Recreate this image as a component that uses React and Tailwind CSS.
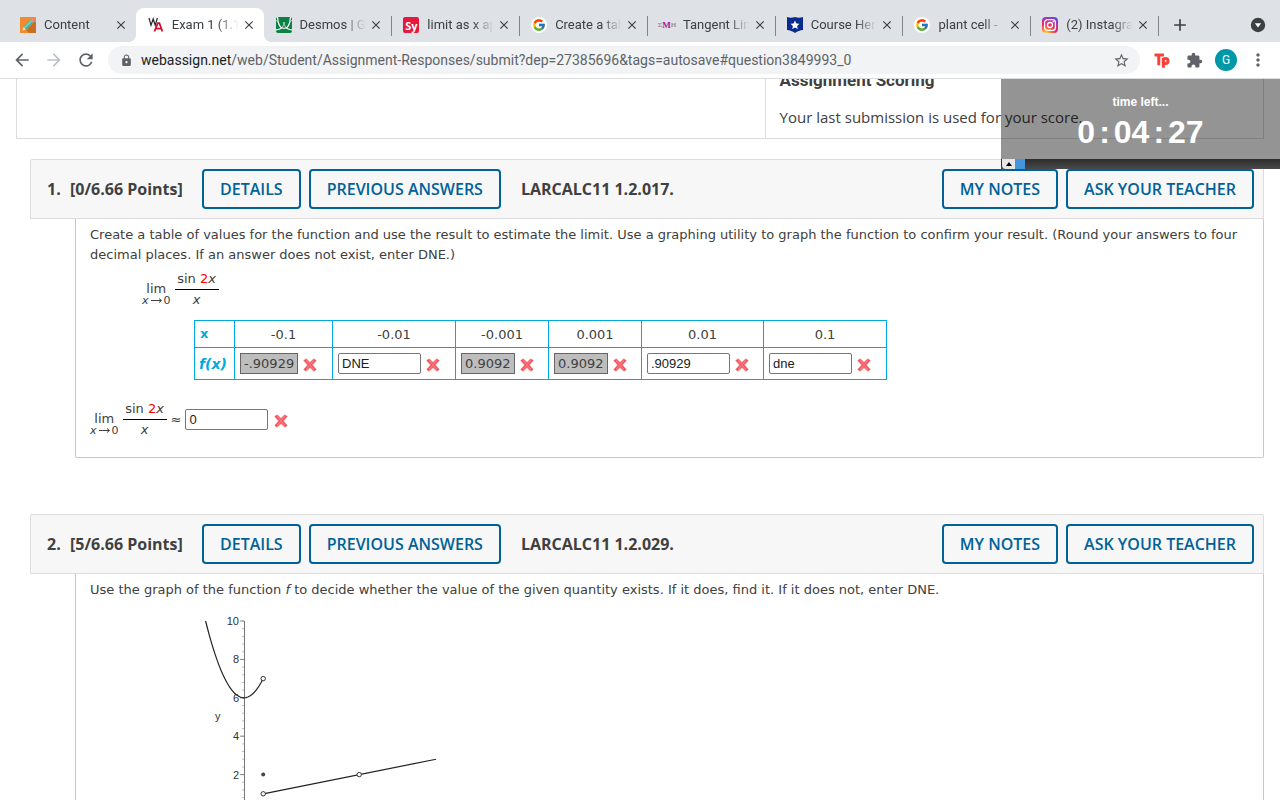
import React, { useState } from 'react';
import {
  MdArrowBack,
  MdArrowForward,
  MdRefresh,
  MdLock,
  MdStarBorder,
  MdExtension,
  MdMoreVert,
  MdClose,
  MdAdd,
} from 'react-icons/md';
import { FcGoogle } from 'react-icons/fc';

const PencilIcon = () => (
  <svg viewBox="0 0 16 16" className="h-4 w-4">
    <rect width="16" height="16" fill="#f08c2e" />
    <path d="M6 13 14.5 4.500 16 6v10H9z" fill="#c96f1f" />
    <path d="M2.500 13.500 3.600 10 6 12.400z" fill="#fde6c4" />
    <path d="M3.600 10 10.600 3l2.400 2.400-7 7z" fill="#3fb8b0" />
    <path d="m4.500 10.900 7-7" stroke="#a8ece2" strokeWidth="1" />
    <path d="m10.600 3 1-.9a1.200 1.200 0 0 1 1.700 0l.7.7a1.200 1.200 0 0 1 0 1.700l-1 .9z" fill="#e884b8" />
  </svg>
);

const WebAssignIcon = () => (
  <svg viewBox="0 0 16 16" className="h-4 w-4">
    <path d="m1 .8 2 7.500L5.200 2l2 6.300L9.400.8" fill="none" stroke="#222" strokeWidth="1.200" />
    <path d="m6.400 14.500 3.400-8.300h1.600l3 8.300M8.300 11.700h5" fill="none" stroke="#d0102a" strokeWidth="1.800" />
  </svg>
);

const DesmosIcon = () => (
  <svg viewBox="0 0 16 16" className="h-4 w-4">
    <rect width="16" height="16" rx="2" fill="#0b8043" />
    <path
      d="M0 3.500c2.500 0 3 7 5.500 7S7.500 5 8 5s0 5.500 2.500 5.500 3-7 5.500-7"
      fill="none"
      stroke="#b5dcc6"
      strokeWidth=".9"
    />
    <path d="M1.500 0C2 7 4 11.500 8 11.500S14 7 14.500 0" fill="none" stroke="#fff" strokeWidth="1.200" />
    <path d="M0 12.800c3 0 4.500-.8 6-2M16 12.800c-3 0-4.500-.8-6-2" stroke="#fff" strokeWidth="1.200" fill="none" />
  </svg>
);

const SymbolabIcon = () => (
  <span className="flex h-4 w-4 items-center justify-center rounded-xs bg-[#e5183e] font-['Open_Sans',sans-serif] text-[11px] leading-none font-bold text-white">
    Sy
  </span>
);

const GoogleIcon = () => (
  <span className="flex h-4 w-4 items-center justify-center rounded-full bg-white">
    <FcGoogle size={14} />
  </span>
);

const SmhIcon = () => (
  <span className="flex h-4 w-4 items-center justify-center font-['Liberation_Serif',serif] text-[7px] leading-none font-bold text-[#9a8c99]">
    Σ<span className="text-[9px] text-[#a3189b]">M</span>H
  </span>
);

const CourseHeroIcon = () => (
  <svg viewBox="0 0 16 16" className="h-4 w-4">
    <path d="M0 0c3 1.200 5.500.8 8 0 2.500.8 5 1.200 8 0v13c-3 .3-5.500 1.200-8 3-2.500-1.800-5-2.700-8-3z" fill="#0b2a8f" />
    <path d="m8 3.500 1.300 3 3.200.3-2.400 2.100.7 3.200L8 10.400l-2.800 1.700.7-3.200-2.400-2.100 3.200-.3z" fill="#fff" />
  </svg>
);

const InstagramIcon = () => (
  <svg viewBox="0 0 16 16" className="h-4 w-4">
    <defs>
      <radialGradient id="insta" cx=".25" cy="1.050" r="1.150">
        <stop offset="0" stopColor="#ffdc66" />
        <stop offset=".25" stopColor="#fb8a35" />
        <stop offset=".5" stopColor="#e8315b" />
        <stop offset=".78" stopColor="#b62cb0" />
        <stop offset="1" stopColor="#5a4fe0" />
      </radialGradient>
    </defs>
    <rect width="16" height="16" rx="4" fill="url(#insta)" />
    <rect x="2.600" y="2.600" width="10.800" height="10.800" rx="3" fill="none" stroke="#fff" strokeWidth="1.300" />
    <circle cx="8" cy="8" r="2.500" fill="none" stroke="#fff" strokeWidth="1.300" />
    <circle cx="11.200" cy="4.800" r=".8" fill="#fff" />
  </svg>
);

const tabs = [
  { title: 'Content', icon: PencilIcon },
  { title: 'Exam 1 (1.1', icon: WebAssignIcon, active: true },
  { title: 'Desmos | G', icon: DesmosIcon },
  { title: 'limit as x ap', icon: SymbolabIcon },
  { title: 'Create a tab', icon: GoogleIcon },
  { title: 'Tangent Lin', icon: SmhIcon },
  { title: 'Course Her', icon: CourseHeroIcon },
  { title: 'plant cell -', icon: GoogleIcon },
  { title: '(2) Instagra', icon: InstagramIcon },
];

const Tab = ({ title, icon: Icon, active, divider }) => (
  <div
    className={`relative flex min-w-0 flex-1 items-center pr-2 pl-3 ${active ? 'rounded-t-lg bg-white' : ''}`}
  >
    {active && (
      <>
        <span className="absolute bottom-0 -left-2 h-2 w-2 bg-[radial-gradient(circle_at_0_0,transparent_8px,white_8px)]" />
        <span className="absolute -right-2 bottom-0 h-2 w-2 bg-[radial-gradient(circle_at_100%_0,transparent_8px,white_8px)]" />
      </>
    )}
    <span className="shrink-0">
      <Icon />
    </span>
    <span className="ml-2 min-w-0 flex-1 overflow-hidden mask-r-from-65% mask-r-to-95% text-[13px] whitespace-nowrap text-[#3c4043]">
      {title}
    </span>
    <button type="button" aria-label={`Close ${title}`} className="shrink-0 text-[#3c4043]">
      <MdClose size={14} />
    </button>
    {divider && <span className="absolute top-2 -right-px h-5 w-px bg-[#808488]" />}
  </div>
);

const ToolButton = ({ label, children }) => (
  <button type="button" aria-label={label} className="flex h-7 w-8 items-center justify-center text-[#5f6368]">
    {children}
  </button>
);

const BrowserChrome = () => (
  <header className="shrink-0 font-[Roboto,sans-serif]">
    <div className="flex h-[42px] bg-[#dee1e6] pt-2 pl-2">
      <div className="flex min-w-0 flex-1">
        {tabs.map((tab, i) => (
          <Tab key={i} {...tab} divider={i > 1} />
        ))}
      </div>
      <div className="flex w-[122px] shrink-0 items-center justify-between pr-3.5 pl-3 text-[#3c4043]">
        <button type="button" aria-label="New tab">
          <MdAdd size={20} />
        </button>
        <button type="button" aria-label="Search tabs">
          <svg viewBox="0 0 16 16" className="h-4 w-4">
            <circle cx="8" cy="8" r="7.200" fill="#3c4043" />
            <path d="M4.800 6.200h6.400L8 10.600z" fill="#fff" />
          </svg>
        </button>
      </div>
    </div>
    <div className="flex h-[37px] items-center gap-1.5 border-b border-[#dadce0] bg-white px-1.5">
      <div className="flex">
        <ToolButton label="Back">
          <MdArrowBack size={20} />
        </ToolButton>
        <ToolButton label="Forward">
          <MdArrowForward size={20} className="text-[#bdc1c6]" />
        </ToolButton>
        <ToolButton label="Reload">
          <MdRefresh size={20} />
        </ToolButton>
      </div>
      <div className="flex h-7 min-w-0 flex-1 items-center rounded-full bg-[#f1f3f4] pr-2.5 pl-3">
        <MdLock size={13} className="shrink-0 text-[#5f6368]" />
        <div className="ml-2 flex-1 truncate text-[14px] text-[#5f6368]">
          <span className="text-[#202124]">webassign.net</span>
          /web/Student/Assignment-Responses/submit?dep=27385696&amp;tags=autosave#question3849993_0
        </div>
        <button type="button" aria-label="Bookmark" className="text-[#5f6368]">
          <MdStarBorder size={17} />
        </button>
      </div>
      <div className="flex">
        <ToolButton label="Toucan">
          <svg viewBox="0 0 16 16" className="h-4 w-4" fill="none" stroke="#f9423a" strokeWidth="3">
            <path d="M.5 3h9.500M4.800 3v10.200M9.400 15.800V6" />
            <circle cx="11.600" cy="9" r="2.400" />
          </svg>
        </ToolButton>
        <ToolButton label="Extensions">
          <MdExtension size={17} />
        </ToolButton>
        <ToolButton label="Profile">
          <span className="flex h-[22px] w-[22px] items-center justify-center rounded-full bg-[#0097a7] text-[12px] text-white">
            G
          </span>
        </ToolButton>
        <ToolButton label="Menu">
          <MdMoreVert size={20} />
        </ToolButton>
      </div>
    </div>
  </header>
);

const Timer = () => (
  <div className="absolute top-0 right-0 w-[279px] font-['Liberation_Sans',Arial,sans-serif] font-bold text-white">
    <div className="flex h-20 flex-col items-center bg-black/42 pt-[15px]">
      <span className="text-[12px] leading-4">time left...</span>
      <span className="mt-1 flex gap-1 text-[32px] leading-9">
        <span>0</span>
        <span>:</span>
        <span>04</span>
        <span>:</span>
        <span>27</span>
      </span>
    </div>
    <div className="flex h-2.5 bg-linear-to-b from-[#2c2c2c] to-[#4a4a4a]">
      <button
        type="button"
        aria-label="Collapse timer"
        className="flex w-3.5 items-center justify-center rounded-bl-sm border-l border-[#333] bg-[#e6e6e6]"
      >
        <svg viewBox="0 0 6 4" className="h-1 w-1.5">
          <path d="M3 0 6 4H0z" fill="#000" />
        </svg>
      </button>
      <span className="w-2.5 bg-[#4496dc]" />
    </div>
  </div>
);

const OutlineButton = ({ children }) => (
  <button
    type="button"
    className="h-10 rounded border-2 border-[#006298] bg-[#f7f7f7] px-4 text-[16px] font-semibold whitespace-nowrap text-[#006298]"
  >
    {children}
  </button>
);

const Question = ({ number, points, code, children }) => (
  <section className="mr-4 ml-[30px]">
    <div className="flex h-[60px] items-center rounded-t-xs border border-[#dcdcdc] bg-[#f7f7f7] pr-[9px] pl-4 font-['Open_Sans',sans-serif] text-[16px] font-bold text-[#404040]">
      <span className="w-[23px]">{number}.</span>
      <span className="w-[132px] whitespace-nowrap">[{points} Points]</span>
      <div className="flex gap-2">
        <OutlineButton>DETAILS</OutlineButton>
        <OutlineButton>PREVIOUS ANSWERS</OutlineButton>
      </div>
      <span className="ml-5 flex-1">{code}</span>
      <div className="flex gap-2">
        <OutlineButton>MY NOTES</OutlineButton>
        <OutlineButton>ASK YOUR TEACHER</OutlineButton>
      </div>
    </div>
    <div className="ml-[45px] rounded-b-xs border border-t-0 border-[#c8c8c8] px-3.5 pt-1.5 pb-[17px] font-[Verdana,'DejaVu_Sans',sans-serif] text-[13px] leading-5 text-[#404040]">
      {children}
    </div>
  </section>
);

const Limit = () => (
  <span className="inline-flex items-center gap-1">
    <span className="flex flex-col items-center pt-2.5">
      <span className="leading-3">lim</span>
      <span className="flex items-center text-[11px] leading-3">
        <i>x</i>
        <svg viewBox="0 0 15 7" className="h-[7px] w-[15px]" fill="none" stroke="#404040">
          <path d="M2 3.500h10M10 1.500l2.500 2-2.500 2" />
        </svg>
        0
      </span>
    </span>
    <span className="flex w-11 flex-col items-center">
      <span className="w-full border-b border-black text-center whitespace-nowrap">
        sin <span className="text-[#f00]">2</span>
        <i>x</i>
      </span>
      <i>x</i>
    </span>
  </span>
);

const WrongMark = () => (
  <svg viewBox="0 0 14 14" role="img" aria-label="Incorrect" className="mt-0.5 h-3.5 w-3.5 shrink-0">
    <path
      d="M3.200.8 7 4.400 10.800.8l2.500 1.700L9.400 7l3.900 4.500-2.300 1.800L7 9.600l-4 3.700-2.300-1.800L4.600 7 .7 2.500z"
      fill="#f8414d"
      stroke="#e88f93"
      strokeWidth=".8"
    />
    <path d="m3 2.500 8 9M11 2.500l-8 9" stroke="#fc7b80" strokeWidth="1.200" />
  </svg>
);

const AnswerInput = ({ label, initial }) => {
  const [value, setValue] = useState(initial);
  return (
    <input
      type="text"
      aria-label={label}
      value={value}
      onChange={(e) => setValue(e.target.value)}
      className="h-[21px] w-[83px] rounded-xs border border-[#767676] bg-white px-[3px] font-['Liberation_Sans',Arial,sans-serif] text-[13px] text-[#202020]"
    />
  );
};

const answers = [
  { x: '-0.1', value: '-.90929', locked: true, width: 'w-[98px]' },
  { x: '-0.01', value: 'DNE', width: 'w-[123px]' },
  { x: '-0.001', value: '0.9092', locked: true, width: 'w-[93px]' },
  { x: '0.001', value: '0.9092', locked: true, width: 'w-[93px]' },
  { x: '0.01', value: '.90929', width: 'w-[122px]' },
  { x: '0.1', value: 'dne', width: 'w-[123px]' },
];

const ValuesTable = () => (
  <table className="ml-[104px] table-fixed border-collapse">
    <thead>
      <tr className="h-[27px]">
        <th scope="row" className="w-10 border border-[#00a9e0] pl-[5px] text-left text-[#00a9e0]">
          x
        </th>
        {answers.map((a) => (
          <th key={a.x} scope="col" className={`${a.width} border border-[#00a9e0] pt-0.5 text-center font-normal`}>
            {a.x}
          </th>
        ))}
      </tr>
    </thead>
    <tbody>
      <tr className="h-8">
        <th
          scope="row"
          className="border border-[#00a9e0] pl-1 text-left text-[14px] whitespace-nowrap text-[#00a9e0] italic"
        >
          f(x)
        </th>
        {answers.map((a) => (
          <td key={a.x} className="border border-[#00a9e0] px-[5px]">
            <span className="flex items-center gap-[5px]">
              {a.locked ? (
                <span className="border border-[#666] bg-[#bdbdbd] px-[3px] leading-[19px]">{a.value}</span>
              ) : (
                <AnswerInput label={`f(${a.x})`} initial={a.value} />
              )}
              <WrongMark />
            </span>
          </td>
        ))}
      </tr>
    </tbody>
  </table>
);

// graph units are 19.2px on both axes, the origin sits at (46, 197)
const UNIT = 19.2;
const gx = (x) => 46 + x * UNIT;
const gy = (y) => 197 - y * UNIT;

const parabola = Array.from({ length: 31 }, (_, i) => {
  const x = -2 + i * 0.1;
  return `${gx(x)},${gy(x * x + 6)}`;
}).join(' ');

const Graph = () => (
  <svg
    width="250"
    height="230"
    viewBox="0 0 250 230"
    role="img"
    aria-label="Graph of f"
    className="font-['Liberation_Sans',Arial,sans-serif] text-[11px]"
  >
    <path d={`M${gx(0) + 0.5} ${gy(10)}V${gy(0)}`} stroke="#777" />
    {Array.from({ length: 26 }, (_, i) => i * 0.4).map((y) => (
      <path key={y} d={`M${gx(0) - 2} ${gy(y)}h2`} stroke="#aaa" strokeWidth=".8" />
    ))}
    {[2, 4, 6, 8, 10].map((y) => (
      <g key={y}>
        <path d={`M${gx(0) - 4} ${gy(y)}h4`} stroke="#888" />
        <text x={gx(0) - 5} y={gy(y) + 4} textAnchor="end" fill="#333">
          {y}
        </text>
      </g>
    ))}
    <text x="17" y={gy(5) + 3} fill="#333">
      y
    </text>
    <polyline points={parabola} fill="none" stroke="#222" strokeWidth="1.200" />
    <path d={`M${gx(1)} ${gy(1)}L${gx(10)} ${gy(2.8)}`} stroke="#222" strokeWidth="1.200" />
    {[[1, 7], [6, 2], [1, 1]].map(([x, y]) => (
      <circle key={`${x},${y}`} cx={gx(x)} cy={gy(y)} r="2.200" fill="#fff" stroke="#333" />
    ))}
    <circle cx={gx(1)} cy={gy(2)} r="2" fill="#444" />
  </svg>
);

const App = () => (
  <div className="flex h-screen flex-col overflow-hidden bg-white">
    <BrowserChrome />
    <main className="relative min-h-0 flex-1 overflow-hidden">
      <div className="mx-4 flex border border-t-0 border-[#dcdcdc] font-['Open_Sans',sans-serif] text-[#404040]">
        <div className="w-3/5" />
        <div className="-mt-3 w-2/5 border-l border-[#dcdcdc] pb-[9px] pl-3.5">
          <h2 className="pt-px font-[Roboto,sans-serif] text-[17px] leading-6 font-bold">Assignment Scoring</h2>
          <p className="mt-[13px] text-[15px] leading-6">Your last submission is used for your score.</p>
        </div>
      </div>

      <div className="mt-5 flex flex-col gap-14">
        <Question number={1} points="0/6.66" code="LARCALC11 1.2.017.">
          <p>
            Create a table of values for the function and use the result to estimate the limit. Use a graphing utility
            to graph the function to confirm your result. (Round your answers to four decimal places. If an answer does
            not exist, enter DNE.)
          </p>
          <div className="mt-1 mb-2.5 ml-[52px] flex">
            <Limit />
          </div>
          <ValuesTable />
          <div className="mt-[19px] flex items-center">
            <Limit />
            <span className="mx-1 text-[13px]">≈</span>
            <AnswerInput label="Limit" initial="0" />
            <span className="ml-1.5">
              <WrongMark />
            </span>
          </div>
        </Question>

        <Question number={2} points="5/6.66" code="LARCALC11 1.2.029.">
          <p>
            Use the graph of the function <i>f</i> to decide whether the value of the given quantity exists. If it
            does, find it. If it does not, enter DNE.
          </p>
          <div className="mt-4 ml-[108px]">
            <Graph />
          </div>
        </Question>
      </div>

      <Timer />
    </main>
  </div>
);

export default App;
